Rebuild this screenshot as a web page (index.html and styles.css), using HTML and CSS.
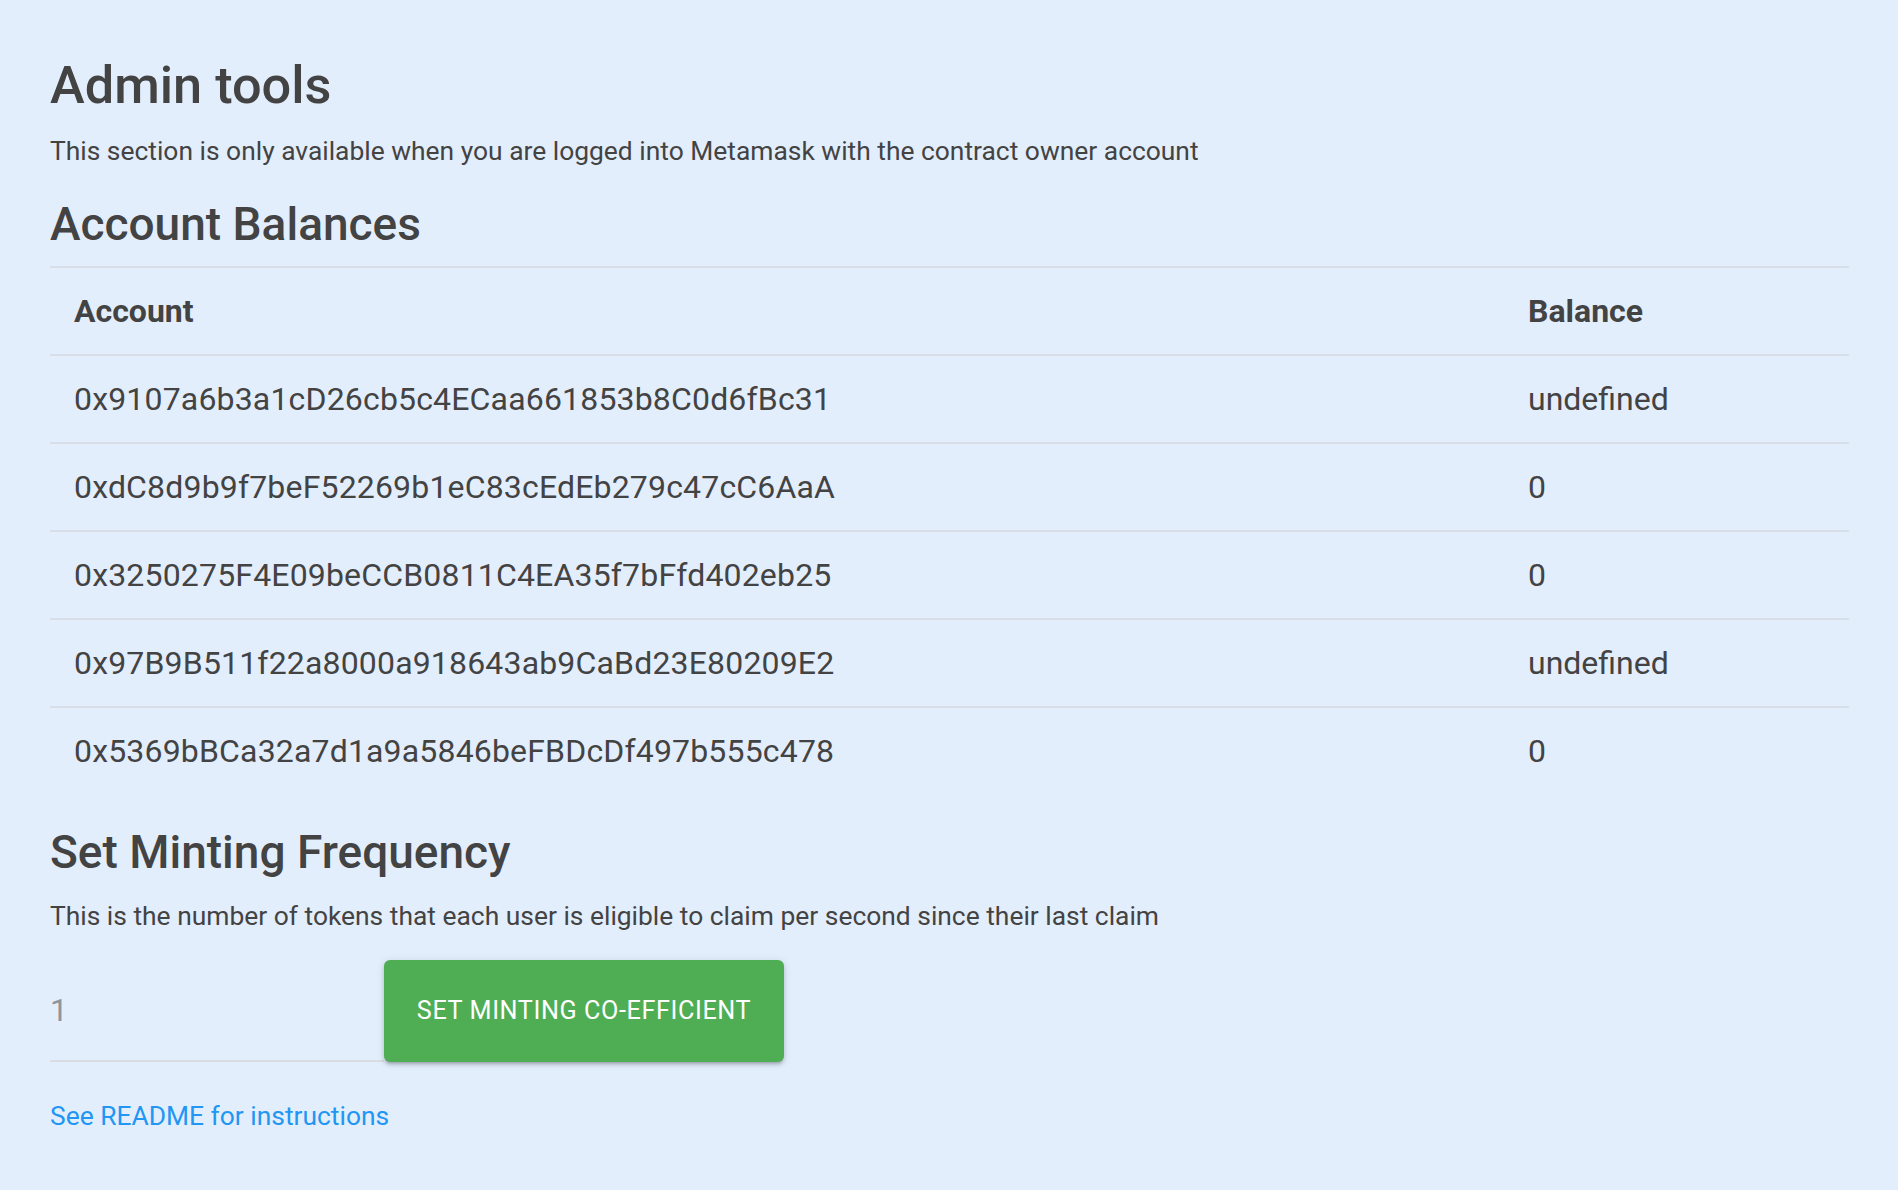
FILE: index.html
```html
<!DOCTYPE html>
<html lang="en">
<head>
<meta charset="utf-8">
<title>Admin tools</title>
<link rel="stylesheet" href="styles.css">
</head>
<body>
<main class="page">
  <h1 class="title">Admin tools</h1>
  <p class="lead">This section is only available when you are logged into Metamask with the contract owner account</p>

  <h2 class="section-title balances-title">Account Balances</h2>
  <table class="balances">
    <colgroup>
      <col class="col-account">
      <col class="col-balance">
    </colgroup>
    <thead>
      <tr><th>Account</th><th>Balance</th></tr>
    </thead>
    <tbody>
      <tr><td class="addr">0x9107a6b3a1cD26cb5c4ECaa661853b8C0d6fBc31</td><td>undefined</td></tr>
      <tr><td class="addr">0xdC8d9b9f7beF52269b1eC83cEdEb279c47cC6AaA</td><td>0</td></tr>
      <tr><td class="addr">0x3250275F4E09beCCB0811C4EA35f7bFfd402eb25</td><td>0</td></tr>
      <tr><td class="addr">0x97B9B511f22a8000a918643ab9CaBd23E80209E2</td><td>undefined</td></tr>
      <tr><td class="addr">0x5369bBCa32a7d1a9a5846beFBDcDf497b555c478</td><td>0</td></tr>
    </tbody>
  </table>

  <h2 class="section-title minting-title">Set Minting Frequency</h2>
  <p class="lead lead-tight">This is the number of tokens that each user is eligible to claim per second since their last claim</p>

  <form class="mint-form" onsubmit="return false">
    <input class="mint-input" type="text" value="1" aria-label="Minting co-efficient">
    <button class="btn-green" type="submit">Set Minting Co-efficient</button>
  </form>

  <a class="readme" href="#">See README for instructions</a>
</main>
</body>
</html>
```

FILE: styles.css
```css
html, body {
  margin: 0;
  padding: 0;
}

body {
  background: #e3eefd;
  color: #434343;
  font-family: Roboto, "Noto Sans", "Liberation Sans", sans-serif;
  min-height: 1190px;
}

.page {
  padding: 53px 49px 40px 50px;
  display: flex;
  flex-direction: column;
  align-items: flex-start;
}

.title {
  font-size: 52.3px;
  line-height: 64px;
  font-weight: 500;
  margin: 0;
}

.lead {
  font-size: 26.4px;
  line-height: 36px;
  margin: 15.5px 0 0;
}

.lead-tight {
  margin-top: 18px;
}

.section-title {
  font-size: 46px;
  line-height: 56px;
  font-weight: 500;
  margin: 0;
}

.balances-title {
  margin-top: 27px;
}

.minting-title {
  margin-top: 30px;
}

.balances {
  width: 100%;
  margin-top: 14px;
  border-collapse: collapse;
  border-top: 2px solid #d8dfe8;
  font-size: 32px;
  line-height: 48px;
}

.col-account {
  width: 1454px;
}

.balances th,
.balances td {
  text-align: left;
  padding: 19px 25px 19px 24px;
}

.balances th {
  font-weight: 700;
}

.balances .addr {
  letter-spacing: 0.17px;
}

.balances tr {
  border-bottom: 2px solid #d8dfe8;
}

.balances tbody tr:last-child {
  border-bottom: none;
}

.mint-form {
  display: flex;
  align-items: flex-start;
  margin-top: 26px;
}

.mint-input {
  width: 334px;
  height: 102px;
  box-sizing: border-box;
  border: none;
  border-bottom: 2px solid #d9dde3;
  background: transparent;
  font-family: inherit;
  font-size: 32px;
  color: #8f959c;
  padding: 0;
  outline: none;
}

.btn-green {
  width: 400px;
  height: 102px;
  border: none;
  border-radius: 6px;
  background: #4fae54;
  color: #ffffff;
  font-family: inherit;
  font-size: 25.2px;
  letter-spacing: 0.6px;
  text-transform: uppercase;
  box-shadow: 0 3px 4px rgba(0, 0, 0, 0.14), 0 1px 8px rgba(0, 0, 0, 0.10), 0 3px 3px -2px rgba(0, 0, 0, 0.18);
  cursor: pointer;
}

.readme {
  margin-top: 36px;
  font-size: 26.4px;
  line-height: 36px;
  color: #2196f3;
  text-decoration: none;
}
```
